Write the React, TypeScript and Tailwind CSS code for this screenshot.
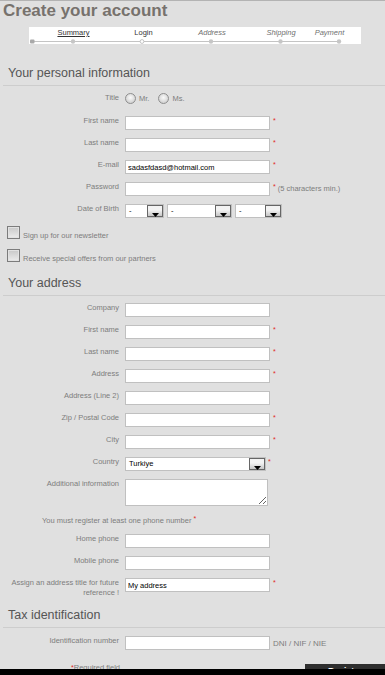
import React from "react";

function Label({ children }: { children: React.ReactNode }) {
  return (
    <div className="w-[119px] shrink-0 text-right text-[7.5px] leading-[10px] text-[#7d7d7d]">
      {children}
    </div>
  );
}

function Star({ ml = "ml-[3px]" }: { ml?: string }) {
  return <span className={`${ml} text-[7px] leading-[10px] text-[#e0281e]`}>*</span>;
}

function TextInput({ value = "" }: { value?: string }) {
  return (
    <input
      readOnly
      value={value}
      className="ml-[6px] h-[14px] w-[145px] shrink-0 border border-[#c0c0c0] bg-white px-[2px] text-[7.5px] leading-[12px] text-black outline-none"
    />
  );
}

function Arrow() {
  return (
    <div className="flex w-[16px] shrink-0 items-end justify-center border border-[#666] bg-linear-to-b from-[#f3f3f3] from-40% to-[#c6c6c6]">
      <svg width="7" height="4" viewBox="0 0 7 4" className="mb-[-1px]">
        <polygon points="0,0 7,0 3.5,4" fill="#000" />
      </svg>
    </div>
  );
}

function Select({ w, value, ml = "" }: { w: string; value: string; ml?: string }) {
  return (
    <div className={`flex h-[14px] shrink-0 border border-[#c0c0c0] bg-white ${w} ${ml}`}>
      <span className="flex-1 pl-[3px] text-[7.5px] leading-[12px] text-black">{value}</span>
      <Arrow />
    </div>
  );
}

function Row({
  label,
  children,
  h = "h-[22px]",
}: {
  label: React.ReactNode;
  children?: React.ReactNode;
  h?: string;
}) {
  return (
    <div className={`flex items-start ${h}`}>
      <Label>{label}</Label>
      {children}
    </div>
  );
}

function SectionHeader({ title, mt }: { title: string; mt: string }) {
  return (
    <div className={`${mt} ml-[3px] h-[21px] border-b border-[#cdcdcd] pl-[5px] text-[12.5px] leading-[16px] text-[#555]`}>
      {title}
    </div>
  );
}

function Radio() {
  return (
    <span className="block h-[11px] w-[11px] shrink-0 rounded-full border border-[#8e8e8e] bg-[radial-gradient(circle_at_50%_40%,#fafafa,#c4c4c4)]" />
  );
}

function Checkbox() {
  return (
    <span className="block h-[13px] w-[13px] shrink-0 border border-[#7c7c7c] bg-linear-to-b from-[#c8c8c8] to-[#ececec] shadow-[inset_0_0_0_1px_#e2e2e2]" />
  );
}

function StepBar() {
  const dots = [44, 113, 182, 251.5, 310];
  return (
    <div className="ml-[29px] mt-[6px] h-[17px] w-[332px] bg-white">
      <div className="flex h-[12px] text-[7.5px] leading-[12px]">
        <span className="w-[89px] text-center text-[#333] underline underline-offset-1">Summary</span>
        <span className="w-[51px] text-center text-[#333]">Login</span>
        <span className="w-[86px] text-center italic text-[#6f6f6f]">Address</span>
        <span className="w-[52px] text-center italic text-[#6f6f6f]">Shipping</span>
        <span className="w-[45px] text-center italic text-[#6f6f6f]">Payment</span>
      </div>
      <svg width="332" height="5" viewBox="0 0 332 5" className="block">
        <line x1="2" y1="2.5" x2="311" y2="2.5" stroke="#c4c4c4" strokeWidth="1.2" />
        <rect x="1" y="0.5" width="4.5" height="4" rx="1" fill="#a9a9a9" />
        {dots.map((x, i) =>
          i === 1 ? (
            <circle key={i} cx={x} cy="2.5" r="1.9" fill="#fff" stroke="#bdbdbd" strokeWidth="0.9" />
          ) : (
            <circle key={i} cx={x} cy="2.5" r="2.2" fill="#c6c6c6" />
          )
        )}
      </svg>
    </div>
  );
}

export default function App() {
  return (
    <div className="relative min-h-[675px] w-[385px] overflow-hidden border-t border-[#b3b3b3] bg-[#e0e0e0] font-['Liberation_Sans',Arial,sans-serif]">
      <h1 className="pl-[3px] text-[17px] font-bold leading-[20px] text-[#77726d]">Create your account</h1>
      <StepBar />

      <SectionHeader title="Your personal information" mt="mt-[21px]" />
      <div className="pt-[7px]">
        <Row label="Title" h="h-[23px]">
          <div className="ml-[6px] flex items-start text-[7.5px] leading-[10px] text-[#7d7d7d]">
            <Radio />
            <span className="ml-[3px] mt-[1px]">Mr.</span>
            <span className="ml-[9px]">
              <Radio />
            </span>
            <span className="ml-[3px] mt-[1px]">Ms.</span>
          </div>
        </Row>
        <Row label="First name">
          <TextInput />
          <Star />
        </Row>
        <Row label="Last name">
          <TextInput />
          <Star />
        </Row>
        <Row label="E-mail">
          <TextInput value="sadasfdasd@hotmail.com" />
          <Star />
        </Row>
        <Row label="Password">
          <TextInput />
          <Star />
          <span className="ml-[2px] mt-[2px] text-[7.5px] leading-[10px] text-[#7d7d7d]">(5 characters min.)</span>
        </Row>
        <Row label="Date of Birth">
          <Select w="w-[39px]" value="-" ml="ml-[6px]" />
          <Select w="w-[65px]" value="-" ml="ml-[3px]" />
          <Select w="w-[47px]" value="-" ml="ml-[3px]" />
        </Row>
        <div className="flex h-[23px] items-start pl-[7px]">
          <Checkbox />
          <span className="ml-[3px] mt-[5px] text-[7.5px] leading-[10px] text-[#7d7d7d]">Sign up for our newsletter</span>
        </div>
        <div className="flex h-[13px] items-start pl-[7px]">
          <Checkbox />
          <span className="ml-[3px] mt-[5px] text-[7.5px] leading-[10px] text-[#7d7d7d]">
            Receive special offers from our partners
          </span>
        </div>
      </div>

      <SectionHeader title="Your address" mt="mt-[13px]" />
      <div className="pt-[7px]">
        <Row label="Company">
          <TextInput />
        </Row>
        <Row label="First name">
          <TextInput />
          <Star />
        </Row>
        <Row label="Last name">
          <TextInput />
          <Star />
        </Row>
        <Row label="Address">
          <TextInput />
          <Star />
        </Row>
        <Row label="Address (Line 2)">
          <TextInput />
        </Row>
        <Row label="Zip / Postal Code">
          <TextInput />
          <Star />
        </Row>
        <Row label="City">
          <TextInput />
          <Star />
        </Row>
        <Row label="Country">
          <Select w="w-[141px]" value="Turkiye" ml="ml-[6px]" />
          <Star ml="ml-[2px]" />
        </Row>
        <Row label="Additional information" h="h-[37px]">
          <textarea
            readOnly
            className="ml-[6px] h-[27px] w-[143px] shrink-0 border border-[#c0c0c0] bg-white outline-none"
          />
        </Row>
        <div className="h-[18px] pl-[42px] text-[7.5px] leading-[10px] text-[#7d7d7d]">
          You must register at least one phone number<span className="ml-[2px] align-top text-[7px] leading-[6px] text-[#e0281e]">*</span>
        </div>
        <Row label="Home phone">
          <TextInput />
        </Row>
        <Row label="Mobile phone">
          <TextInput />
        </Row>
        <Row
          label={
            <>
              Assign an address title for future
              <br />
              reference !
            </>
          }
          h="h-[29px]"
        >
          <TextInput value="My address" />
          <Star />
        </Row>
      </div>

      <SectionHeader title="Tax identification" mt="mt-0" />
      <div className="pt-[8px]">
        <Row label="Identification number">
          <TextInput />
          <span className="ml-[3px] mt-[3px] text-[8px] leading-[10px] text-[#7d7d7d]">DNI / NIF / NIE</span>
        </Row>
        <div className="flex h-[11px] overflow-hidden">
          <div className="w-[120px] shrink-0 pt-[5px] text-right text-[7.5px] leading-[10px] text-[#7d7d7d]">
            <span className="text-[7px] text-[#e0281e]">*</span>Required field
          </div>
          <div className="ml-auto mt-[6px] h-[20px] w-[80px] bg-[#2f2f2f] pt-[2px] text-center text-[8.5px] font-bold leading-[10px] text-white">
            Register
          </div>
        </div>
        <div className="h-[8px] bg-black" />
      </div>
    </div>
  );
}
